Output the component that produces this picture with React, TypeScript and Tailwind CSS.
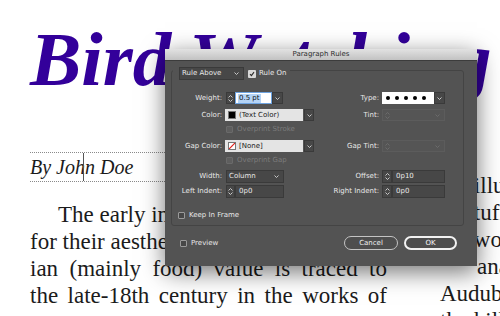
import React from "react";

const ChevDown = ({ c = "#d6d6d6" }: { c?: string }) => (
  <svg width="5" height="3" viewBox="0 0 5 3">
    <path d="M0.5 0.5L2.5 2.5L4.5 0.5" stroke={c} fill="none" strokeWidth="0.9" />
  </svg>
);
const ChevUp = ({ c = "#d6d6d6" }: { c?: string }) => (
  <svg width="5" height="3" viewBox="0 0 5 3">
    <path d="M0.5 2.5L2.5 0.5L4.5 2.5" stroke={c} fill="none" strokeWidth="0.9" />
  </svg>
);

const Stepper = ({ w = "w-[9px]" }: { w?: string }) => (
  <div className={`flex h-full ${w} flex-col items-center justify-center gap-[1px] border border-[#3a3a3a] bg-[#474747]`}>
    <ChevUp />
    <ChevDown />
  </div>
);

const ArrowBtn = ({ w = "w-[11px]" }: { w?: string }) => (
  <div className={`flex h-full ${w} items-center justify-center border border-[#3a3a3a] bg-[#474747]`}>
    <ChevDown />
  </div>
);

const Label = ({ children }: { children: React.ReactNode }) => (
  <div className="whitespace-nowrap text-right text-[7px] leading-[12px] text-[#e8e8e8]">{children}</div>
);

const Check = ({ checked = false, disabled = false }: { checked?: boolean; disabled?: boolean }) => {
  if (checked)
    return (
      <div className="flex h-[8px] w-[8px] items-center justify-center rounded-[1px] bg-[#d8d8d8]">
        <svg width="6" height="6" viewBox="0 0 6 6">
          <path d="M1 3.2L2.4 4.6L5 1.2" stroke="#2a2a2a" strokeWidth="1.1" fill="none" />
        </svg>
      </div>
    );
  return (
    <div
      className={`h-[7px] w-[7px] rounded-[1px] border ${
        disabled ? "border-[#6a6a6a] bg-[#5e5e5e]" : "border-[#9a9a9a] bg-[#474747]"
      }`}
    />
  );
};

const DisabledField = () => (
  <div className="flex h-full w-[63px] items-center border border-[#5c5c5c] bg-[#555555]">
    <div className="flex h-full w-[9px] flex-col items-center justify-center gap-[1px]">
      <ChevUp c="#6e6e6e" />
      <ChevDown c="#6e6e6e" />
    </div>
    <div className="ml-auto mr-[4px]">
      <ChevDown c="#6e6e6e" />
    </div>
  </div>
);

const ROW = "grid h-[12px] grid-cols-[49px_102px_49px_63px] items-center gap-x-[3px]";

export default function App() {
  const serif = "font-['Liberation_Serif',serif]";
  return (
    <div className={`relative h-[316px] w-[500px] overflow-hidden bg-white ${serif} text-[#1b1b1b]`}>
      {/* Document */}
      <div className="pl-[30px] pt-[21px]">
        <div className="h-[131px] whitespace-nowrap text-[77px] font-bold italic leading-[77px] text-[#33009a]">
          Bird Watching
        </div>
        <div className="flex">
          <div className="w-[357px] shrink-0">
            <div className="relative h-[30px] border-y border-dotted border-[#8a8a8a] text-[20px] italic leading-[28px]">
              By John Doe
              <div className="absolute bottom-0 left-[53px] top-0 w-px bg-[#555555]" />
            </div>
            <div className="mt-[19px] text-[23px] leading-[27px]">
              <div className="whitespace-nowrap pl-[28px]">The early interest in birds was mainly</div>
              <div className="whitespace-nowrap">for their aesthetic appeal, while their</div>
              <div className="whitespace-nowrap text-justify [text-align-last:justify]">
                ian (mainly food) value is traced to
              </div>
              <div className="whitespace-nowrap text-justify [text-align-last:justify]">
                the late-18th century in the works of
              </div>
            </div>
          </div>
          <div className="ml-[53px] pt-[20px] text-[23px] leading-[27px]">
            <div className="whitespace-nowrap">the illustrations</div>
            <div className="whitespace-nowrap">of stuffed</div>
            <div className="whitespace-nowrap">the works</div>
            <div className="whitespace-nowrap pl-[37px]">anatomy</div>
            <div className="whitespace-nowrap">Audubon</div>
            <div className="whitespace-nowrap">the killing</div>
          </div>
        </div>
      </div>

      {/* Dialog */}
      <div className="absolute left-[165px] top-[49px] z-10 flex h-[217px] w-[312px] flex-col bg-[#535353] font-['DejaVu_Sans',sans-serif] shadow-[0_6px_22px_rgba(0,0,0,0.55)]">
        <div className="h-[12px] border-b border-[#3c3c3c] bg-gradient-to-b from-[#e2e2e2] to-[#c2c2c2] text-center text-[7px] leading-[11px] text-[#2e2e2e]">
          Paragraph Rules
        </div>

        <div className="ml-[6px] mt-[9px] w-[293px] rounded-[3px] border border-[#444444] pb-[4px] pl-[1px]">
          {/* legend */}
          <div className="relative -mt-[4px] flex h-[13px] w-fit items-center bg-[#535353] pr-[4px]">
            <div className="ml-[6px] flex h-[13px] w-[65px] items-center justify-between border border-[#3a3a3a] bg-[#474747] pl-[2px] pr-[4px] text-[7px] text-[#e8e8e8]">
              <span>Rule Above</span>
              <ChevDown />
            </div>
            <div className="ml-[4px]">
              <Check checked />
            </div>
            <span className="ml-[3px] text-[7px] text-[#e8e8e8]">Rule On</span>
          </div>

          {/* Weight / Type */}
          <div className={`mt-[12px] ${ROW}`}>
            <Label>Weight:</Label>
            <div className="ml-[1px] flex h-full">
              <Stepper />
              <div className="flex h-full w-[37px] items-center border border-[#6ea3e0] bg-white pl-[2px]">
                <span className="bg-[#b4d3f5] px-[1px] text-[7px] leading-[9px] text-[#111]">0.5 pt</span>
              </div>
              <ArrowBtn />
            </div>
            <Label>Type:</Label>
            <div className="flex h-full">
              <div className="flex h-full w-[52px] items-center gap-[5px] bg-white pl-[4px]">
                {[0, 1, 2, 3, 4].map((i) => (
                  <div key={i} className="h-[4px] w-[4px] rounded-full bg-black" />
                ))}
              </div>
              <ArrowBtn />
            </div>
          </div>

          {/* Color / Tint */}
          <div className={`mt-[5px] ${ROW}`}>
            <Label>Color:</Label>
            <div className="flex h-full">
              <div className="flex h-full w-[78px] items-center bg-[#e4e4e4] pl-[3px]">
                <div className="h-[8px] w-[8px] border border-[#777] bg-black" />
                <span className="ml-[3px] text-[7px] text-[#1a1a1a]">(Text Color)</span>
              </div>
              <div className="ml-[1px] h-full">
                <ArrowBtn w="w-[10px]" />
              </div>
            </div>
            <Label>Tint:</Label>
            <DisabledField />
          </div>

          {/* Overprint Stroke */}
          <div className={`mt-[2px] ${ROW}`}>
            <div />
            <div className="ml-[1px] flex items-center gap-[4px]">
              <Check disabled />
              <span className="whitespace-nowrap text-[7px] text-[#7c7c7c]">Overprint Stroke</span>
            </div>
          </div>

          {/* Gap Color / Gap Tint */}
          <div className={`mt-[5px] ${ROW}`}>
            <Label>Gap Color:</Label>
            <div className="flex h-full">
              <div className="flex h-full w-[78px] items-center bg-[#e4e4e4] pl-[3px]">
                <div className="relative h-[8px] w-[8px] overflow-hidden border border-[#777] bg-white">
                  <svg width="8" height="8" viewBox="0 0 8 8" className="absolute -left-px -top-px">
                    <path d="M0 8L8 0" stroke="#e0201a" strokeWidth="1.2" />
                  </svg>
                </div>
                <span className="ml-[3px] text-[7px] text-[#1a1a1a]">[None]</span>
              </div>
              <div className="ml-[1px] h-full">
                <ArrowBtn w="w-[10px]" />
              </div>
            </div>
            <Label>Gap Tint:</Label>
            <DisabledField />
          </div>

          {/* Overprint Gap */}
          <div className={`mt-[2px] ${ROW}`}>
            <div />
            <div className="ml-[1px] flex items-center gap-[4px]">
              <Check disabled />
              <span className="whitespace-nowrap text-[7px] text-[#7c7c7c]">Overprint Gap</span>
            </div>
          </div>

          {/* Width / Offset */}
          <div className={`mt-[4px] ${ROW}`}>
            <Label>Width:</Label>
            <div className="ml-[1px] flex h-full w-[58px] items-center justify-between border border-[#3a3a3a] bg-[#474747] pl-[2px] pr-[4px] text-[7px] text-[#e8e8e8]">
              <span>Column</span>
              <ChevDown />
            </div>
            <Label>Offset:</Label>
            <div className="flex h-full">
              <Stepper w="w-[10px]" />
              <div className="flex h-full w-[53px] items-center border border-[#3a3a3a] bg-[#474747] pl-[3px] text-[7px] text-[#e8e8e8]">
                0p10
              </div>
            </div>
          </div>

          {/* Left / Right Indent */}
          <div className={`mt-[3px] ${ROW}`}>
            <Label>Left Indent:</Label>
            <div className="ml-[1px] flex h-full">
              <Stepper />
              <div className="flex h-full w-[49px] items-center border border-[#3a3a3a] bg-[#474747] pl-[3px] text-[7px] text-[#e8e8e8]">
                0p0
              </div>
            </div>
            <Label>Right Indent:</Label>
            <div className="flex h-full">
              <Stepper w="w-[10px]" />
              <div className="flex h-full w-[53px] items-center border border-[#3a3a3a] bg-[#474747] pl-[3px] text-[7px] text-[#e8e8e8]">
                0p0
              </div>
            </div>
          </div>

          {/* Keep In Frame */}
          <div className="mt-[12px] flex h-[12px] items-center gap-[4px] pl-[5px]">
            <Check />
            <span className="text-[7px] text-[#e8e8e8]">Keep In Frame</span>
          </div>
        </div>

        {/* Bottom row */}
        <div className="mt-[10px] flex h-[14px] items-center pl-[15px] pr-[20px]">
          <Check />
          <span className="ml-[4px] text-[7px] text-[#e8e8e8]">Preview</span>
          <div className="ml-auto flex h-full gap-[6px]">
            <div className="flex h-full w-[54px] items-center justify-center rounded-full border border-[#c4c4c4] bg-[#4e4e4e] text-[7px] text-[#f0f0f0]">
              Cancel
            </div>
            <div className="flex h-full w-[53px] items-center justify-center rounded-full border-2 border-[#f2f2f2] bg-[#4e4e4e] text-[7px] text-[#f8f8f8]">
              OK
            </div>
          </div>
        </div>
      </div>
    </div>
  );
}
